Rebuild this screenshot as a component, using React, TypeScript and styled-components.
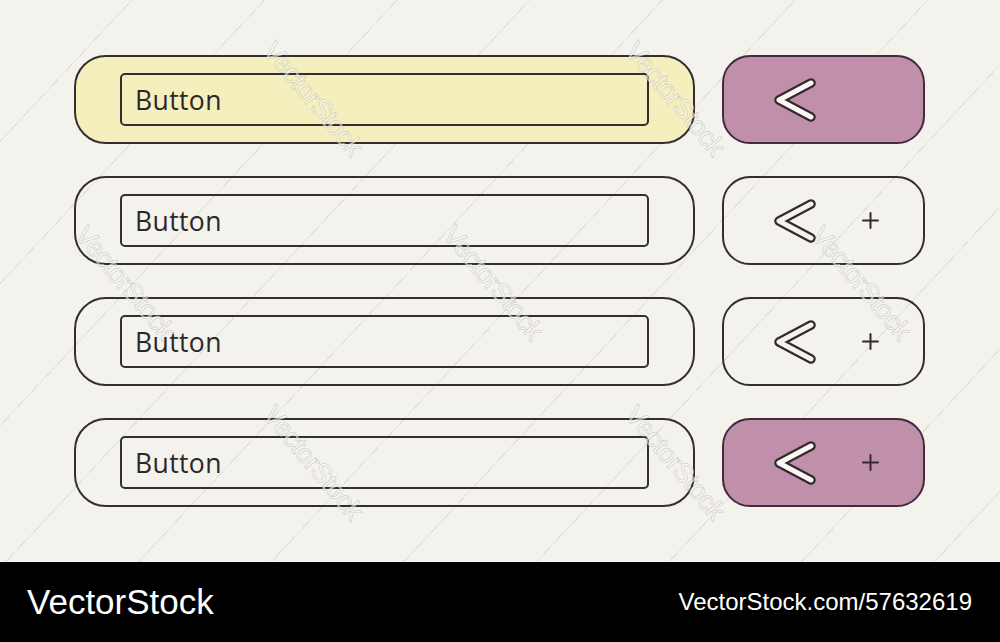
import React from "react";
import styled, { createGlobalStyle } from "styled-components";

const GlobalStyle = createGlobalStyle`
  html, body {
    margin: 0;
    padding: 0;
    background: #f3f2ec;
  }
  * {
    box-sizing: border-box;
  }
`;

const Page = styled.div`
  width: 1000px;
  height: 642px;
  display: flex;
  flex-direction: column;
  overflow: hidden;
`;

const Canvas = styled.div`
  position: relative;
  height: 562px;
  padding: 55px 0 0 74px;
  display: flex;
  flex-direction: column;
  gap: 32px;
  background-color: #f3f2ec;
  background-image: repeating-linear-gradient(
    133deg,
    transparent 0px,
    transparent 96px,
    rgba(150, 150, 140, 0.2) 96px,
    rgba(150, 150, 140, 0.2) 97px
  );
  overflow: hidden;
`;

const Row = styled.div`
  display: flex;
  gap: 27px;
  height: 89px;
`;

const FieldPill = styled.div<{ $yellow?: boolean }>`
  width: 621px;
  height: 100%;
  border: 2.5px solid #332e30;
  border-radius: 32px;
  background: ${(p) => (p.$yellow ? "#f5efbd" : "transparent")};
  display: flex;
  align-items: center;
  padding: 0 44px;
`;

const Field = styled.div`
  flex: 1;
  height: 53px;
  border: 2.5px solid #332e30;
  border-radius: 5px;
  display: flex;
  align-items: center;
  padding-left: 13px;
  font-family: "Open Sans", "Noto Sans", sans-serif;
  font-size: 26.5px;
  color: #2b2728;
  letter-spacing: 0.4px;
`;

const IconButton = styled.div<{ $purple?: boolean }>`
  width: 203px;
  height: 100%;
  border: 2.5px solid ${(p) => (p.$purple ? "#45293f" : "#332e30")};
  border-radius: 28px;
  background: ${(p) => (p.$purple ? "#c090ab" : "transparent")};
  display: flex;
  align-items: center;
  padding-left: 48px;
  gap: 44px;
`;

const Footer = styled.div`
  height: 80px;
  background: #000;
  display: flex;
  align-items: center;
  justify-content: space-between;
  padding: 0 28px 0 27px;
  color: #fff;
  font-family: "Liberation Sans", Arial, sans-serif;
`;

const Brand = styled.span`
  font-size: 35px;
`;

const Link = styled.span`
  font-size: 24px;
`;

const Watermark = styled.span<{ $x: number; $y: number }>`
  position: absolute;
  left: ${(p) => p.$x}px;
  top: ${(p) => p.$y}px;
  transform: rotate(50deg);
  transform-origin: left top;
  font-family: "Liberation Sans", Arial, sans-serif;
  font-size: 27px;
  color: rgba(255, 255, 255, 0.6);
  -webkit-text-stroke: 0.7px rgba(140, 140, 135, 0.4);
  letter-spacing: -0.5px;
  pointer-events: none;
  white-space: nowrap;
`;

const Chevron = ({ filled }: { filled: boolean }) => (
  <svg width="46" height="46" viewBox="0 0 46 46">
    <path
      d="M39 6 L7 23 L39 40"
      fill="none"
      stroke="#34282f"
      strokeWidth="9.5"
      strokeLinecap="round"
      strokeLinejoin="round"
    />
    <path
      d="M39 6 L7 23 L39 40"
      fill="none"
      stroke={filled ? "#fbf8f3" : "#f3f2ec"}
      strokeWidth="5"
      strokeLinecap="round"
      strokeLinejoin="round"
    />
  </svg>
);

const Plus = () => (
  <svg width="17" height="17" viewBox="0 0 17 17">
    <path d="M8.5 1 V16 M1 8.5 H16" stroke="#34282f" strokeWidth="2" strokeLinecap="round" />
  </svg>
);

type RowData = { yellow: boolean; purple: boolean; plus: boolean };

const rows: RowData[] = [
  { yellow: true, purple: true, plus: false },
  { yellow: false, purple: false, plus: true },
  { yellow: false, purple: false, plus: true },
  { yellow: false, purple: true, plus: true },
];

const marks = [
  { x: 280, y: 36 },
  { x: 642, y: 36 },
  { x: 92, y: 220 },
  { x: 460, y: 220 },
  { x: 828, y: 220 },
  { x: 280, y: 400 },
  { x: 642, y: 400 },
];

export default function App() {
  return (
    <>
      <GlobalStyle />
      <Page>
        <Canvas>
          {rows.map((r, i) => (
            <Row key={i}>
              <FieldPill $yellow={r.yellow}>
                <Field>Button</Field>
              </FieldPill>
              <IconButton $purple={r.purple}>
                <Chevron filled={r.purple} />
                {r.plus && <Plus />}
              </IconButton>
            </Row>
          ))}
          {marks.map((m, i) => (
            <Watermark key={i} $x={m.x} $y={m.y}>
              VectorStock
            </Watermark>
          ))}
        </Canvas>
        <Footer>
          <Brand>VectorStock</Brand>
          <Link>VectorStock.com/57632619</Link>
        </Footer>
      </Page>
    </>
  );
}
